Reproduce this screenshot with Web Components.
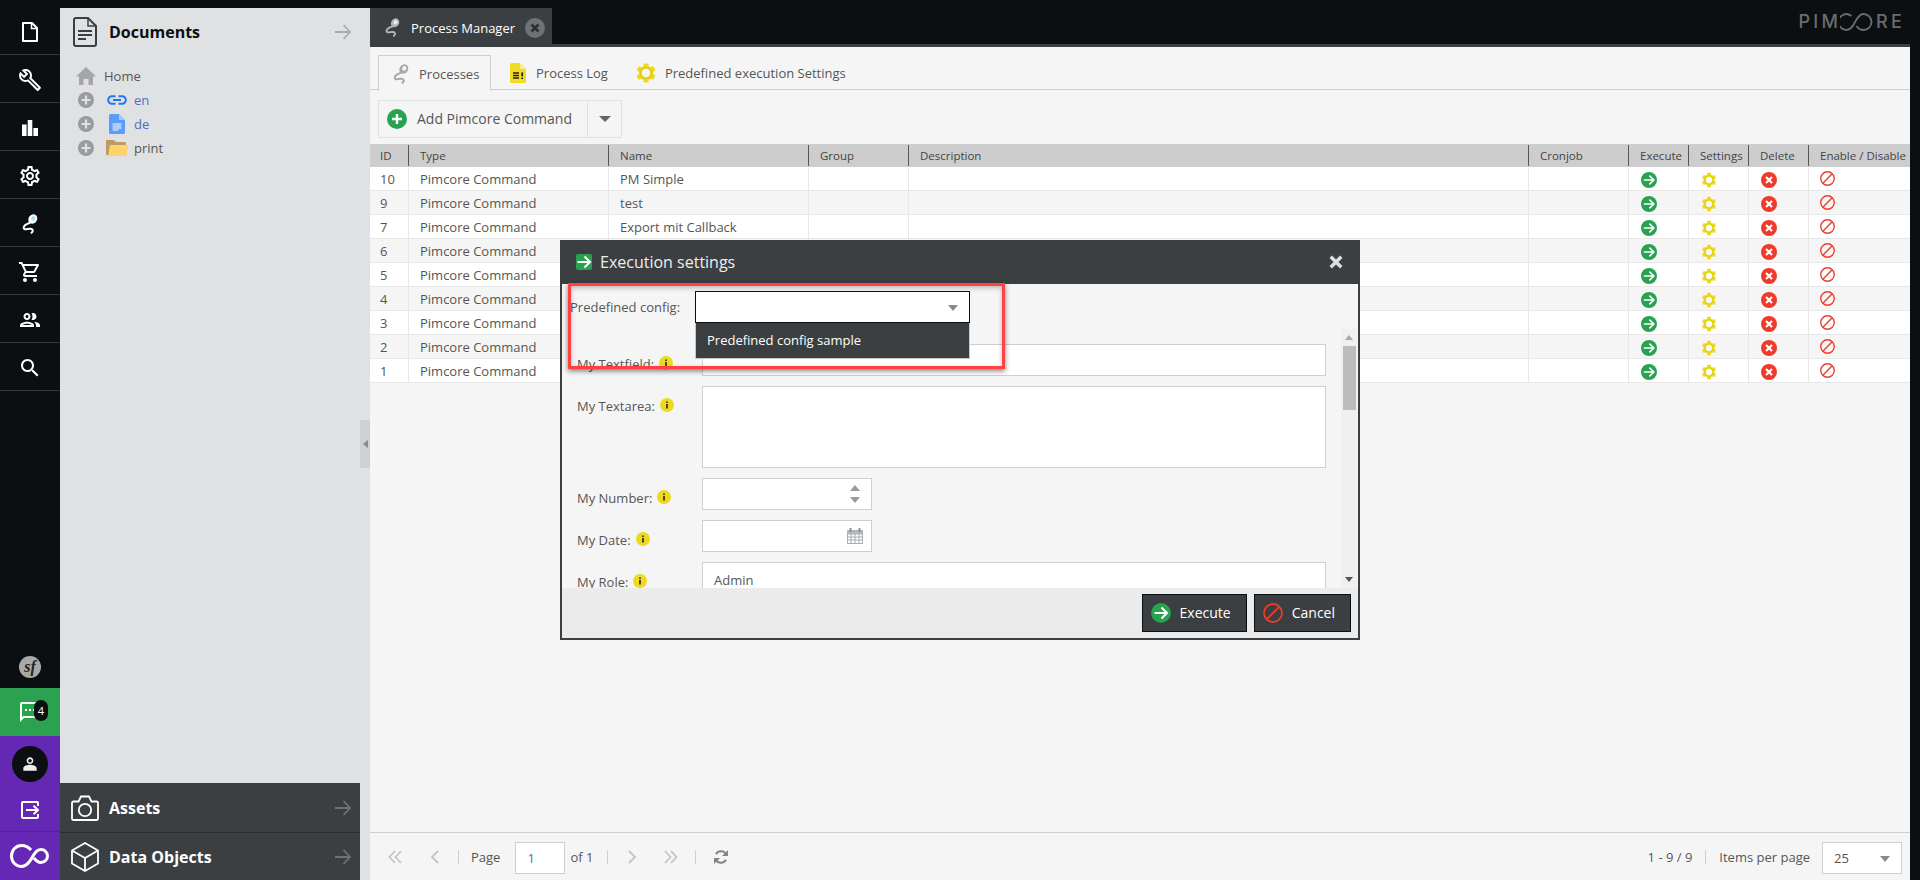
<!DOCTYPE html>
<html lang="en">
<head>
<meta charset="utf-8">
<title>Process Manager</title>
<style>
  html, body { margin: 0; height: 100%; background: #0b0f12; overflow: hidden; }
  body { font: 13px/18px "Open Sans", "Liberation Sans", sans-serif; color: #555; }
</style>
</head>
<body>
<pim-app></pim-app>

<script>
const plug = (body, head) => `<path d="M7.500 9C4.500 10 1.500 11.200 1.700 13.800c.2 2.700 4.300 .6 7 1 2.300.4 2.800 2.200.8 4" fill="none" stroke="${body}" stroke-width="2" stroke-linecap="round"/><ellipse cx="10.800" cy="5" rx="4.200" ry="5" transform="rotate(35 10.800 5)" fill="${body}"/><ellipse cx="11.300" cy="4.400" rx="2" ry="2.400" transform="rotate(35 11.300 4.400)" fill="${head}"/>`;
const GEAR = 'M19.14 12.94c.04-.3.06-.61.06-.94 0-.32-.02-.64-.07-.94l2.030-1.580c.18-.14.23-.41.12-.61l-1.920-3.320c-.12-.22-.37-.29-.59-.22l-2.390.96c-.5-.38-1.030-.7-1.620-.94l-.36-2.540c-.04-.24-.24-.41-.48-.41h-3.840c-.24 0-.43.17-.47.41l-.36 2.540c-.59.24-1.130.57-1.620.94l-2.390-.96c-.22-.08-.47 0-.59.22L2.740 8.870c-.12.21-.08.47.12.61l2.030 1.580c-.05.3-.09.63-.09.94s.02.64.07.94l-2.030 1.580c-.18.14-.23.41-.12.61l1.920 3.320c.12.22.37.29.59.22l2.390-.96c.5.38 1.030.7 1.620.94l.36 2.540c.05.24.24.41.48.41h3.840c.24 0 .44-.17.47-.41l.36-2.540c.59-.24 1.130-.56 1.620-.94l2.390.96c.22.08.47 0 .59-.22l1.920-3.320c.12-.22.07-.47-.12-.61l-2.010-1.580zM12 16.200c-2.320 0-4.200-1.880-4.200-4.200s1.880-4.200 4.200-4.200 4.200 1.880 4.200 4.200-1.880 4.200-4.200 4.200z';
const ICONS = {
  page: ['0 0 16 20', '<path d="M1 1h9l5 5v13H1z" fill="none" stroke="currentColor" stroke-width="2" stroke-linejoin="round"/><path d="M9.500 1v5.500H15" fill="none" stroke="currentColor" stroke-width="1.500"/>'],
  wrench: ['0 0 24 24', '<path fill="currentColor" d="M22.610 18.990l-9.080-9.080c.93-2.340.45-5.100-1.440-7-2.300-2.300-5.890-2.510-8.440-.64L7.480 6.100 6.100 7.480 2.280 3.660c-1.870 2.540-1.660 6.130.64 8.430 1.860 1.860 4.570 2.350 6.890 1.480l9.110 9.110c.39.39 1.020.39 1.410 0l2.300-2.300c.4-.38.4-1.010-.02-1.390zm-3 1.600l-9.460-9.460c-.61.45-1.290.72-2 .82-1.360.2-2.790-.21-3.830-1.250C3.370 9.760 2.930 8.500 3 7.260l3.090 3.090 4.240-4.240-3.090-3.090c1.240-.07 2.490.37 3.440 1.310 1.080 1.080 1.490 2.570 1.240 3.960-.12.71-.42 1.370-.88 1.960l9.450 9.450-.88.88z"/>'],
  bars: ['0 0 16 16', '<path fill="currentColor" d="M0 4.500h4.600V16H0zM5.700 0h4.600v16H5.700zM11.400 8H16v8h-4.600z"/>'],
  cog: ['0 0 24 24', '<path fill="currentColor" d="M19.430 12.980c.04-.32.07-.64.07-.98 0-.34-.03-.66-.07-.98l2.110-1.650c.19-.15.24-.42.12-.64l-2-3.460c-.09-.16-.26-.25-.44-.25-.06 0-.12.01-.17.03l-2.490 1c-.52-.4-1.080-.73-1.690-.98l-.38-2.650C14.460 2.180 14.250 2 14 2h-4c-.25 0-.46.18-.49.42l-.38 2.650c-.61.25-1.170.59-1.690.98l-2.490-1c-.06-.02-.12-.03-.18-.03-.17 0-.34.09-.43.25l-2 3.460c-.13.22-.07.49.12.64l2.110 1.650c-.04.32-.07.65-.07.98 0 .33.03.66.07.98l-2.110 1.650c-.19.15-.24.42-.12.64l2 3.460c.09.16.26.25.44.25.06 0 .12-.01.17-.03l2.490-1c.52.4 1.080.73 1.690.98l.38 2.650c.03.24.24.42.49.42h4c.25 0 .46-.18.49-.42l.38-2.650c.61-.25 1.170-.59 1.690-.98l2.490 1c.06.02.12.03.18.03.17 0 .34-.09.43-.25l2-3.460c.12-.22.07-.49-.12-.64l-2.110-1.650zm-1.980-1.710c.04.31.05.52.05.73 0 .21-.02.43-.05.73l-.14 1.130.89.7 1.080.84-.7 1.210-1.270-.51-1.040-.42-.9.68c-.43.32-.84.56-1.250.73l-1.060.43-.16 1.130-.2 1.350h-1.400l-.19-1.350-.16-1.130-1.060-.43c-.43-.18-.83-.41-1.230-.71l-.91-.7-1.060.43-1.270.51-.7-1.210 1.080-.84.89-.7-.14-1.130c-.03-.31-.05-.54-.05-.74s.02-.43.05-.73l.14-1.130-.89-.7-1.080-.84.7-1.210 1.270.51 1.040.42.9-.68c.43-.32.84-.56 1.250-.73l1.060-.43.16-1.130.2-1.350h1.390l.19 1.350.16 1.130 1.060.43c.43.18.83.41 1.230.71l.91.7 1.060-.43 1.270-.51.7 1.210-1.070.85-.89.7.14 1.130zM12 8c-2.210 0-4 1.790-4 4s1.790 4 4 4 4-1.790 4-4-1.790-4-4-4zm0 6c-1.100 0-2-.9-2-2s.9-2 2-2 2 .9 2 2-.9 2-2 2z"/>'],
  'plug-nav': ['0 0 16 20', plug('#fff', '#a9dcf5')],
  'plug-dim': ['0 0 16 20', plug('#a8a8a8', '#f5f5f5')],
  'plug-tab': ['0 0 16 20', plug('#b5b6b7', '#eeeeee')],
  cart: ['0 0 24 24', '<path fill="currentColor" d="M15.550 13c.75 0 1.410-.41 1.750-1.030l3.580-6.490c.37-.66-.11-1.480-.87-1.480H5.210l-.94-2H1v2h2l3.600 7.590-1.350 2.440C4.520 15.370 5.480 17 7 17h12v-2H7l1.100-2h7.450zM6.160 6h12.150l-2.760 5H8.530L6.160 6zM7 18c-1.100 0-1.990.9-1.990 2S5.900 22 7 22s2-.9 2-2-.9-2-2-2zm10 0c-1.100 0-1.990.9-1.990 2s.89 2 1.990 2 2-.9 2-2-.9-2-2-2z"/>'],
  people: ['0 0 24 24', '<path fill="currentColor" d="M9 13.750c-2.340 0-7 1.170-7 3.500V19h14v-1.750c0-2.330-4.660-3.500-7-3.500zM4.340 17c.84-.58 2.870-1.250 4.660-1.250s3.820.67 4.660 1.250H4.340zM9 12c1.930 0 3.500-1.570 3.500-3.500S10.930 5 9 5 5.500 6.570 5.500 8.500 7.070 12 9 12zm0-5c.83 0 1.500.67 1.500 1.500S9.830 10 9 10s-1.500-.67-1.500-1.500S8.170 7 9 7zm7.040 6.810c1.160.84 1.960 1.960 1.960 3.440V19h4v-1.750c0-2.020-3.500-3.170-5.960-3.440zM15 12c1.930 0 3.500-1.570 3.500-3.500S16.930 5 15 5c-.54 0-1.040.13-1.500.35.63.89 1 1.980 1 3.150s-.37 2.260-1 3.150c.46.22.96.35 1.500.35z"/>'],
  search: ['0 0 24 24', '<path fill="currentColor" d="M15.500 14h-.79l-.28-.27C15.410 12.590 16 11.110 16 9.500 16 5.910 13.090 3 9.500 3S3 5.910 3 9.500 5.910 16 9.500 16c1.610 0 3.090-.59 4.230-1.570l.27.28v.79l5 4.990L20.490 19l-4.990-5zm-6 0C7.010 14 5 11.990 5 9.500S7.010 5 9.500 5 14 7.010 14 9.500 11.990 14 9.500 14z"/>'],
  chat: ['0 0 24 24', '<path fill="currentColor" d="M20 2H4c-1.100 0-2 .9-2 2v18l4-4h14c1.100 0 2-.9 2-2V4c0-1.100-.9-2-2-2zm0 14H5.170L4 17.170V4h16v12zM7 9h2v2H7zm4 0h2v2h-2zm4 0h2v2h-2z"/>'],
  person: ['0 0 24 24', '<path fill="#eee" fill-rule="evenodd" d="M12 5.900c1.160 0 2.100.94 2.100 2.100s-.94 2.100-2.100 2.100S9.900 9.160 9.900 8s.94-2.100 2.100-2.100M12 4C9.790 4 8 5.790 8 8s1.790 4 4 4 4-1.790 4-4-1.790-4-4-4zm0 9c-2.670 0-8 1.340-8 4v3h16v-3c0-2.660-5.330-4-8-4z"/>'],
  logout: ['0 0 18 18', '<path d="M17 5V2a1 1 0 0 0-1-1H2a1 1 0 0 0-1 1v14a1 1 0 0 0 1 1h14a1 1 0 0 0 1-1v-3M5 9h12M12.500 4.800 17 9l-4.500 4.200" fill="none" stroke="currentColor" stroke-width="2"/>'],
  infinity: ['0 0 40 24', '<path d="M21 6C18 2.500 15 1.500 11.500 1.500 6 1.500 1.500 6 1.500 12S6 22.500 11.500 22.500C17 22.500 20 17.500 23 12c2.500-4.500 4.500-6.500 8-6.500 3.700 0 6.500 3 6.500 6.500s-2.800 6.500-6.500 6.500c-3 0-5-1.800-7-4.500" fill="none" stroke="currentColor" stroke-width="3"/>'],
  docs: ['0 0 24 30', '<path d="M1 3a2 2 0 0 1 2-2h12l8 8v18a2 2 0 0 1-2 2H3a2 2 0 0 1-2-2z" fill="none" stroke="currentColor" stroke-width="2"/><path d="M15 1v8h8" fill="none" stroke="currentColor" stroke-width="1.500"/><path d="M5 14h14M5 18h14M5 22h8" stroke="currentColor" stroke-width="2"/>'],
  camera: ['0 0 28 26', '<path d="M2.500 6.500h5L10 1.500h8l2.500 5h5a1.500 1.500 0 0 1 1.500 1.500v15.500a1.500 1.500 0 0 1-1.500 1.500h-23A1.500 1.500 0 0 1 1 23.500V8a1.500 1.500 0 0 1 1.500-1.500z" fill="none" stroke="currentColor" stroke-width="1.800"/><circle cx="14" cy="15" r="6.200" fill="none" stroke="currentColor" stroke-width="1.800"/>'],
  cube: ['0 0 28 30', '<path d="M14 1 27 8.500v13L14 29 1 21.500v-13zM1 8.500 14 16l13-7.500M14 16v13" fill="none" stroke="currentColor" stroke-width="1.800" stroke-linejoin="round"/>'],
  arrow: ['0 0 16 16', '<path d="M0 8h15M8.500 1 15 8l-6.500 7" fill="none" stroke="currentColor" stroke-width="1.800"/>'],
  home: ['0 0 20 18', '<path fill="currentColor" d="M10 0 20 9.500h-3V18h-4.500v-6h-5v6H3V9.500H0z"/>'],
  expand: ['0 0 16 16', '<circle cx="8" cy="8" r="8" fill="#9a9b9c"/><path d="M8 3.500v9M3.500 8h9" stroke="#e0e1e3" stroke-width="2.200"/>'],
  link: ['0 0 20 10', '<path d="M8.500 1.200H5a3.800 3.800 0 0 0 0 7.600h3.500M11.500 1.200H15a3.800 3.800 0 0 1 0 7.600h-3.500M6 5h8" fill="none" stroke="#2177f0" stroke-width="2"/>'],
  doc: ['0 0 16 20', '<path fill="#5a9cf8" d="M1.500 0H10l6 6v12.500a1.500 1.500 0 0 1-1.500 1.500h-13A1.500 1.500 0 0 1 0 18.500v-17A1.500 1.500 0 0 1 1.500 0z"/><path fill="#a6c8fb" d="M10 0l6 6h-6z"/><path d="M3.500 10h9M3.500 12h9M3.500 14h9M3.500 16h6" stroke="#fff" stroke-width="1"/>'],
  folder: ['0 0 22 16', '<path fill="#bd9a66" d="M1 0h7l2 2h9a1 1 0 0 1 1 1v12H0V1a1 1 0 0 1 1-1z"/><path fill="#fdd46b" d="M4 5h17a1 1 0 0 1 1 1.200L20.500 15a1 1 0 0 1-1 1H2.200z"/>'],
  close: ['0 0 20 20', '<circle cx="10" cy="10" r="10" fill="#6f7173"/><path d="M6.500 6.500l7 7M13.500 6.500l-7 7" stroke="#2b2d2f" stroke-width="2.600"/>'],
  log: ['0 0 16 20', '<path fill="#f0dc21" d="M1.500 0H10l6 6v12.500a1.500 1.500 0 0 1-1.500 1.500h-13A1.500 1.500 0 0 1 0 18.500v-17A1.500 1.500 0 0 1 1.500 0z"/><path fill="#f8ee8c" d="M10 0l6 6h-6z"/><path d="M3 10h6M3 12.500h6M3 15h6" stroke="#222" stroke-width="1.300"/><path d="M12.200 9.500v3.800M12.200 14.500V16" stroke="#222" stroke-width="1.800"/>'],
  gear: ['0 0 24 24', `<path fill="#efd91e" d="${GEAR}"/><circle cx="12" cy="12" r="5.700" fill="none" stroke="#b9a817" stroke-width=".8" opacity=".5"/>`],
  add: ['0 0 20 20', '<circle cx="10" cy="10" r="10" fill="#28a24f"/><path d="M10 5v10M5 10h10" stroke="#fff" stroke-width="2.400"/>'],
  run: ['0 0 20 20', '<circle cx="10" cy="10" r="10" fill="#28a24f"/><path d="M3.500 10h12M10.500 4.500 16 10l-5.500 5.500" fill="none" stroke="#fff" stroke-width="2"/>'],
  'run-square': ['0 0 16 16', '<rect width="16" height="16" rx="2" fill="#28a24f"/><path d="M1.500 8h12M8.500 2.500 14 8l-5.500 5.500" fill="none" stroke="#fff" stroke-width="2"/>'],
  del: ['0 0 16 16', '<circle cx="8" cy="8" r="8" fill="#ee3b2b"/><path d="M5 5l6 6M11 5l-6 6" stroke="#fff" stroke-width="2.200"/>'],
  ban: ['0 0 20 20', '<circle cx="10" cy="10" r="9" fill="none" stroke="#ee3b2b" stroke-width="1.800"/><path d="M3.800 16.200 16.200 3.800" stroke="#ee3b2b" stroke-width="1.800"/>'],
  'x-mark': ['0 0 12 12', '<path d="M1.500 1.500l9 9M10.500 1.500l-9 9" stroke="#dedede" stroke-width="3"/>'],
  info: ['0 0 14 14', '<circle cx="7" cy="7" r="7" fill="#efd91e"/><path d="M7 3.500v1.500M7 6v4.500" stroke="#222" stroke-width="1.600"/>'],
  calendar: ['0 0 16 16', '<path d="M.5 2.500h15v13H.5zM.5 6h15M.5 9h15M.5 12h15M4 6v9.500M8 6v9.500M12 6v9.500" fill="#fff" stroke="#a9acb0" stroke-width="1"/><path d="M.5 2.500h15V6H.5z" fill="#b4b7bb"/><path d="M3.500 0v4M12.500 0v4" stroke="#8f9297" stroke-width="2"/>'],
  first: ['0 0 14 14', '<path d="M7 1 1.500 7 7 13M13 1 7.500 7l5.500 6" fill="none" stroke="#c4c4c4" stroke-width="1.800"/>'],
  prev: ['0 0 10 14', '<path d="M8 1 2 7l6 6" fill="none" stroke="#c4c4c4" stroke-width="1.800"/>'],
  next: ['0 0 10 14', '<path d="M2 1l6 6-6 6" fill="none" stroke="#c4c4c4" stroke-width="1.800"/>'],
  last: ['0 0 14 14', '<path d="M1 1l5.500 6L1 13M7 1l5.500 6L7 13" fill="none" stroke="#c4c4c4" stroke-width="1.800"/>'],
  refresh: ['0 0 14 14', '<path d="M12.500 5.500A5.700 5.700 0 0 0 2 4.200M1.500 8.500A5.700 5.700 0 0 0 12 9.800" fill="none" stroke="#858585" stroke-width="2"/><path d="M14 0v6H8zM0 14V8h6z" fill="#858585"/>']
};

class PimIcon extends HTMLElement {
  connectedCallback() {
    const [box, body] = ICONS[this.getAttribute('name')];
    const w = this.getAttribute('w') || 16;
    const h = this.getAttribute('h') || w;
    this.attachShadow({ mode: 'open' }).innerHTML = `
      <style>:host { display: inline-flex; flex: none; } svg { display: block; }</style>
      <svg xmlns="http://www.w3.org/2000/svg" width="${w}" height="${h}" viewBox="${box}">${body}</svg>`;
  }
}
customElements.define('pim-icon', PimIcon);

const sidebarTemplate = document.createElement('template');
sidebarTemplate.innerHTML = `
  <style>
    :host { display: flex; flex-direction: column; flex: none; box-sizing: border-box; width: 60px; height: 880px; padding-top: 7px; background: #0b0f12; color: #fff; }
    .item { box-sizing: border-box; flex: none; height: 48px; padding-top: 3px; display: flex; align-items: center; justify-content: center; border-bottom: 1px solid #33363a; }
    .spacer { flex: 1; }
    .symfony { height: 48px; flex: none; display: flex; align-items: center; justify-content: center; padding-top: 6px; box-sizing: border-box; }
    .symfony span { width: 22px; height: 22px; border-radius: 50%; background: #a9a9a9; color: #222; text-align: center; font: italic 700 16px/21px "Liberation Serif", serif; }
    .chat { position: relative; flex: none; height: 48px; background: #2aa250; display: flex; align-items: center; justify-content: center; }
    .badge { position: absolute; left: 34px; top: 12px; width: 14px; height: 21px; border-radius: 7px; background: #0b0f12; font-size: 11px; line-height: 21px; text-align: center; }
    .user { background: #6428b4; flex: none; height: 144px; display: flex; flex-direction: column; }
    .avatar-row { height: 49px; display: flex; justify-content: center; padding-top: 10px; box-sizing: border-box; }
    .avatar { width: 36px; height: 36px; border-radius: 50%; background: #0b0f12; display: flex; align-items: center; justify-content: center; }
    .logout { height: 47px; display: flex; align-items: center; justify-content: center; border-bottom: 1px solid #54209a; padding-top: 4px; box-sizing: border-box; }
    .logo { flex: 1; display: flex; align-items: center; justify-content: center; }
  </style>
  <div class="item"><pim-icon name="page" w="16" h="20"></pim-icon></div>
  <div class="item"><pim-icon name="wrench" w="24"></pim-icon></div>
  <div class="item"><pim-icon name="bars" w="16"></pim-icon></div>
  <div class="item"><pim-icon name="cog" w="24"></pim-icon></div>
  <div class="item"><pim-icon name="plug-nav" w="16" h="20"></pim-icon></div>
  <div class="item"><pim-icon name="cart" w="24"></pim-icon></div>
  <div class="item"><pim-icon name="people" w="24"></pim-icon></div>
  <div class="item"><pim-icon name="search" w="24"></pim-icon></div>
  <div class="spacer"></div>
  <div class="symfony"><span>sf</span></div>
  <div class="chat"><pim-icon name="chat" w="24"></pim-icon><span class="badge">4</span></div>
  <div class="user">
    <div class="avatar-row"><div class="avatar"><pim-icon name="person" w="20"></pim-icon></div></div>
    <div class="logout"><pim-icon name="logout" w="18"></pim-icon></div>
    <div class="logo"><pim-icon name="infinity" w="40" h="24"></pim-icon></div>
  </div>
`;
class PimSidebar extends HTMLElement {
  constructor() {
    super();
    this.attachShadow({ mode: 'open' }).append(sidebarTemplate.content.cloneNode(true));
  }
}
customElements.define('pim-sidebar', PimSidebar);

const treeRowTemplate = document.createElement('template');
treeRowTemplate.innerHTML = `
  <style>
    :host { display: flex; align-items: center; height: 24px; padding-left: 18px; }
    .exp { display: flex; margin-right: 12px; }
    .ico { display: flex; justify-content: center; width: 22px; margin-right: 6px; }
    :host([root]) .ico { width: 20px; margin: 0 8px 0 -2px; }
    :host([root]) .exp { display: none; }
    :host([linked]) { color: #4a70bd; }
  </style>
  <span class="exp"><pim-icon name="expand" w="16"></pim-icon></span>
  <span class="ico"></span>
  <slot></slot>
`;
class PimTreeRow extends HTMLElement {
  constructor() {
    super();
    this.attachShadow({ mode: 'open' }).append(treeRowTemplate.content.cloneNode(true));
  }
  connectedCallback() {
    const icon = document.createElement('pim-icon');
    icon.setAttribute('name', this.getAttribute('icon'));
    icon.setAttribute('w', this.getAttribute('w'));
    icon.setAttribute('h', this.getAttribute('h'));
    icon.style.color = '#a5a6a7';
    this.shadowRoot.querySelector('.ico').append(icon);
  }
}
customElements.define('pim-tree-row', PimTreeRow);

const accordionTemplate = document.createElement('template');
accordionTemplate.innerHTML = `
  <style>
    :host { display: flex; align-items: center; flex: none; box-sizing: border-box; height: 48px; padding: 0 9px 0 11px; background: #3c3f41; color: #fff; font-weight: 700; font-size: 16px; border-top: 1px solid #2c2e30; }
    :host([open]) { background: none; color: #0b0f12; border: 0; }
    :host([tall]) { height: 49px; border: 0; }
    .ico { display: flex; justify-content: center; width: 28px; margin-right: 10px; }
    .title { flex: 1; }
    .arrow { display: flex; color: #6f7173; }
    :host([open]) .arrow { color: #a9aaac; }
    :host([open]) .ico { color: #3c3f41; }
  </style>
  <span class="ico"><slot name="icon"></slot></span>
  <span class="title"><slot></slot></span>
  <span class="arrow"><pim-icon name="arrow" w="16"></pim-icon></span>
`;
class PimAccordion extends HTMLElement {
  constructor() {
    super();
    this.attachShadow({ mode: 'open' }).append(accordionTemplate.content.cloneNode(true));
  }
}
customElements.define('pim-accordion', PimAccordion);

const treePanelTemplate = document.createElement('template');
treePanelTemplate.innerHTML = `
  <style>
    :host { display: flex; flex-direction: column; flex: none; width: 310px; height: 872px; margin-top: 8px; background: #e0e1e3; position: relative; }
    .panel { width: 300px; height: 100%; display: flex; flex-direction: column; }
    .tree { flex: 1; padding-top: 8px; }
    .collapse { position: absolute; left: 300px; top: 412px; width: 10px; height: 48px; background: #cfd0d1; display: flex; align-items: center; justify-content: center; }
    .collapse i { border: 4px solid transparent; border-right: 5px solid #8a8a8a; border-left: 0; }
  </style>
  <div class="panel">
    <pim-accordion open><pim-icon slot="icon" name="docs" w="24" h="30"></pim-icon>Documents</pim-accordion>
    <div class="tree">
      <pim-tree-row root icon="home" w="20" h="18">Home</pim-tree-row>
      <pim-tree-row linked icon="link" w="20" h="10">en</pim-tree-row>
      <pim-tree-row linked icon="doc" w="16" h="20">de</pim-tree-row>
      <pim-tree-row icon="folder" w="22" h="16">print</pim-tree-row>
    </div>
    <pim-accordion tall><pim-icon slot="icon" name="camera" w="28" h="26"></pim-icon>Assets</pim-accordion>
    <pim-accordion><pim-icon slot="icon" name="cube" w="28" h="30"></pim-icon>Data Objects</pim-accordion>
  </div>
  <div class="collapse"><i></i></div>
`;
class PimTreePanel extends HTMLElement {
  constructor() {
    super();
    this.attachShadow({ mode: 'open' }).append(treePanelTemplate.content.cloneNode(true));
  }
}
customElements.define('pim-tree-panel', PimTreePanel);

const tabStripTemplate = document.createElement('template');
tabStripTemplate.innerHTML = `
  <style>
    :host { display: flex; flex: none; justify-content: space-between; box-sizing: border-box; height: 47px; padding-top: 8px; background: #0b0f12; border-bottom: 3px solid #3c3f41; }
    .tab { display: flex; align-items: center; height: 39px; width: 182px; box-sizing: border-box; padding-left: 15px; background: #3c3f41; color: #fff; }
    .tab span { margin: 0 10px 0 11px; }
    .logo { display: flex; align-items: center; height: 20px; margin: 4px 5px 0 0; color: #6a6c6e; font: 500 18px/20px Inter, "Liberation Sans", sans-serif; letter-spacing: 3.200px; }
    .logo svg { margin: 0 3px 0 -1px; }
  </style>
  <div class="tab">
    <pim-icon name="plug-tab" w="15" h="19"></pim-icon>
    <span>Process Manager</span>
    <pim-icon name="close" w="20"></pim-icon>
  </div>
  <div class="logo">PIM<svg width="33" height="18" viewBox="0 0 32 18"><path d="M11 3C9 1.500 7.500 1 6 1a8 8 0 0 0 0 16c3.500 0 6-3 8-7s5-9 9-9a8 8 0 0 1 0 16c-3 0-5-1-7-4" fill="none" stroke="currentColor" stroke-width="1.800"/></svg>RE</div>
`;
class PimTabStrip extends HTMLElement {
  constructor() {
    super();
    this.attachShadow({ mode: 'open' }).append(tabStripTemplate.content.cloneNode(true));
  }
}
customElements.define('pim-tab-strip', PimTabStrip);

const subTabsTemplate = document.createElement('template');
subTabsTemplate.innerHTML = `
  <style>
    :host { display: flex; flex: none; box-sizing: border-box; height: 43px; padding: 8px 0 0 8px; border-bottom: 1px solid #cfcfcf; }
    .tab { display: flex; align-items: center; box-sizing: border-box; height: 35px; padding: 0 11px 0 15px; }
    .tab--active { width: 113px; height: 36px; border: 1px solid #cfcfcf; border-bottom: 0; background: #f5f5f5; padding-left: 14px; }
    .tab span { margin-left: 10px; }
    .log { margin-left: 4px; }
    .gear span { margin-left: 7px; }
  </style>
  <div class="tab tab--active"><pim-icon name="plug-dim" w="16" h="20"></pim-icon><span>Processes</span></div>
  <div class="tab log"><pim-icon name="log" w="16" h="20"></pim-icon><span>Process Log</span></div>
  <div class="tab gear"><pim-icon name="gear" w="24"></pim-icon><span>Predefined execution Settings</span></div>
`;
class PimSubTabs extends HTMLElement {
  constructor() {
    super();
    this.attachShadow({ mode: 'open' }).append(subTabsTemplate.content.cloneNode(true));
  }
}
customElements.define('pim-sub-tabs', PimSubTabs);

const toolbarTemplate = document.createElement('template');
toolbarTemplate.innerHTML = `
  <style>
    :host { display: flex; flex: none; box-sizing: border-box; height: 54px; padding: 10px 0 6px 8px; }
    .split { display: flex; height: 38px; box-sizing: border-box; border: 1px solid #e0e0e0; }
    .main { display: flex; align-items: center; box-sizing: border-box; width: 209px; padding-left: 8px; border-right: 1px solid #e0e0e0; }
    .main span { margin-left: 10px; font-size: 14px; }
    .more { display: flex; align-items: center; justify-content: center; width: 33px; }
    .more i { border: 6px solid transparent; border-top: 6px solid #666; border-bottom: 0; }
  </style>
  <div class="split">
    <div class="main"><pim-icon name="add" w="20"></pim-icon><span>Add Pimcore Command</span></div>
    <div class="more"><i></i></div>
  </div>
`;
class PimToolbar extends HTMLElement {
  constructor() {
    super();
    this.attachShadow({ mode: 'open' }).append(toolbarTemplate.content.cloneNode(true));
  }
}
customElements.define('pim-toolbar', PimToolbar);

const gridTemplate = document.createElement('template');
gridTemplate.innerHTML = `
  <style>
    :host { display: block; flex: 1; --cols: 39px 200px 200px 100px 620px 100px 60px 60px 60px 101px; }
    .head, .row { display: grid; grid-template-columns: var(--cols); }
    .head { height: 23px; background: #cdcdcd; color: #444; font-size: 11.500px; line-height: 23px; }
    .head div { padding-left: 11px; position: relative; white-space: nowrap; overflow: hidden; }
    .head div:first-child { padding-left: 10px; }
    .head div:not(:last-child)::after { content: ""; position: absolute; right: 0; top: 1px; bottom: 1px; width: 1px; background: #555; }
    .row { box-sizing: border-box; height: 24px; border-bottom: 1px solid #e8e8e8; line-height: 23px; }
    .row:nth-child(odd) { background: #fff; }
    .row div { display: flex; align-items: center; box-sizing: border-box; padding: 1px 0 0 11px; border-right: 1px solid #e8e8e8; min-width: 0; }
    .row div:first-child { padding-left: 10px; }
    .row div:last-child { border-right: 0; }
    .row .act--run { padding-left: 12px; }
    .row .act--ban { padding: 0 0 1px 11px; }
  </style>
  <div class="head"></div>
  <div class="body"></div>
`;
class PimGrid extends HTMLElement {
  constructor() {
    super();
    this.attachShadow({ mode: 'open' }).append(gridTemplate.content.cloneNode(true));
  }
  connectedCallback() {
    const cols = ['ID', 'Type', 'Name', 'Group', 'Description', 'Cronjob', 'Execute', 'Settings', 'Delete', 'Enable / Disable'];
    const rows = [[10, 'PM Simple'], [9, 'test'], [7, 'Export mit Callback'], [6, ''], [5, ''], [4, ''], [3, ''], [2, ''], [1, '']];
    this.shadowRoot.querySelector('.head').innerHTML = cols.map(c => `<div>${c}</div>`).join('');
    this.shadowRoot.querySelector('.body').innerHTML = rows.map(([id, name]) => `
      <div class="row">
        <div>${id}</div><div>Pimcore Command</div><div>${name}</div><div></div><div></div><div></div>
        <div class="act--run"><pim-icon name="run" w="16"></pim-icon></div>
        <div><pim-icon name="gear" w="18"></pim-icon></div>
        <div class="act--run"><pim-icon name="del" w="16"></pim-icon></div>
        <div class="act--ban"><pim-icon name="ban" w="15"></pim-icon></div>
      </div>`).join('');
  }
}
customElements.define('pim-grid', PimGrid);

const pagerTemplate = document.createElement('template');
pagerTemplate.innerHTML = `
  <style>
    :host { display: flex; flex: none; align-items: center; box-sizing: border-box; height: 48px; padding: 0 8px 0 18px; border-top: 1px solid #cfcfcf; }
    .sep { width: 1px; height: 14px; background: #cfcfcf; }
    .box { box-sizing: border-box; height: 32px; border: 1px solid #cfcfcf; background: #fff; display: flex; align-items: center; margin-top: 2px; }
    .page { width: 50px; padding-left: 11px; margin: 2px 5px 0 15px; color: #4a70bd; }
    .count { margin-left: auto; }
    .size { width: 80px; padding-left: 11px; margin-left: 12px; position: relative; }
    .size i { position: absolute; right: 11px; top: 13px; border: 5px solid transparent; border-top: 6px solid #8a8a8a; border-bottom: 0; }
  </style>
  <pim-icon name="first" w="14"></pim-icon>
  <pim-icon name="prev" w="10" h="14" style="margin-left:28px"></pim-icon>
  <span class="sep" style="margin-left:18px"></span>
  <span style="margin-left:12px">Page</span>
  <span class="box page">1</span>
  <span>of 1</span>
  <span class="sep" style="margin-left:14px"></span>
  <pim-icon name="next" w="10" h="14" style="margin-left:19px"></pim-icon>
  <pim-icon name="last" w="14" style="margin-left:27px"></pim-icon>
  <span class="sep" style="margin-left:17px"></span>
  <pim-icon name="refresh" w="14" style="margin-left:18px"></pim-icon>
  <span class="count">1 - 9 / 9</span>
  <span class="sep" style="margin-left:13px"></span>
  <span style="margin-left:13px">Items per page</span>
  <span class="box size">25<i></i></span>
`;
class PimPager extends HTMLElement {
  constructor() {
    super();
    this.attachShadow({ mode: 'open' }).append(pagerTemplate.content.cloneNode(true));
  }
}
customElements.define('pim-pager', PimPager);

const fieldTemplate = document.createElement('template');
fieldTemplate.innerHTML = `
  <style>
    :host { display: flex; margin-bottom: 10px; }
    .label { display: flex; align-items: center; flex: none; width: 125px; height: 18px; margin-top: 11px; white-space: nowrap; }
    .label pim-icon { margin-left: 5px; margin-top: -2px; }
    .box { box-sizing: border-box; position: relative; width: var(--w, 624px); height: var(--h, 32px); border: 1px solid #cfcfcf; background: #fff; padding: 8px 11px; }
    .trail { position: absolute; right: 8px; top: 0; bottom: 0; width: 16px; display: flex; flex-direction: column; align-items: center; justify-content: center; gap: 6px; }
    .up { border: 5px solid transparent; border-bottom: 6px solid #9a9a9a; border-top: 0; }
    .down { border: 5px solid transparent; border-top: 6px solid #9a9a9a; border-bottom: 0; }
  </style>
  <div class="label"></div>
  <div class="box"><slot></slot><div class="trail"><slot name="trail"></slot></div></div>
`;
class PimField extends HTMLElement {
  constructor() {
    super();
    this.attachShadow({ mode: 'open' }).append(fieldTemplate.content.cloneNode(true));
  }
  connectedCallback() {
    const root = this.shadowRoot;
    root.querySelector('.label').innerHTML = `${this.getAttribute('label')}:<pim-icon name="info" w="14"></pim-icon>`;
    if (this.hasAttribute('spinner')) {
      root.querySelector('.trail').innerHTML = '<i class="up"></i><i class="down"></i>';
    }
  }
}
customElements.define('pim-field', PimField);

const buttonTemplate = document.createElement('template');
buttonTemplate.innerHTML = `
  <style>
    :host { display: inline-flex; align-items: center; box-sizing: border-box; height: 38px; padding: 0 15px 0 8px; border: 1px solid #0b0f12; background: #3c3f41; color: #fff; font-size: 14px; }
    span { margin-left: 9px; }
  </style>
  <slot name="icon"></slot><span><slot></slot></span>
`;
class PimButton extends HTMLElement {
  constructor() {
    super();
    this.attachShadow({ mode: 'open' }).append(buttonTemplate.content.cloneNode(true));
  }
}
customElements.define('pim-button', PimButton);

const windowTemplate = document.createElement('template');
windowTemplate.innerHTML = `
  <style>
    :host { position: absolute; left: 560px; top: 240px; width: 800px; height: 400px; box-sizing: border-box; display: flex; flex-direction: column; border: 2px solid #3c3f41; border-top: 0; background: #f5f5f5; }
    .head { display: flex; align-items: center; flex: none; height: 44px; margin: 0 -2px; padding: 0 17px 0 16px; background: #3c3f41; color: #eee; font-size: 16px; }
    .head span { flex: 1; margin-left: 8px; }
    .config { display: flex; flex: none; height: 45px; box-sizing: border-box; padding: 7px 0 0 8px; }
    .config label { width: 125px; line-height: 32px; }
    .combo { position: relative; box-sizing: border-box; width: 275px; height: 32px; border: 1px solid #0b0f12; background: #fff; }
    .combo i { position: absolute; right: 11px; top: 13px; border: 5px solid transparent; border-top: 6px solid #8a8a8a; border-bottom: 0; }
    .list { position: absolute; z-index: 2; left: -1px; right: -1px; top: 31px; height: 36px; box-sizing: border-box; padding-left: 11px; border: 1px solid #c8c8c8; border-top: 0; background: #3c3f41; color: #fff; line-height: 34px; }
    .scroll { display: flex; flex: 1; min-height: 0; }
    .form { flex: 1; overflow: hidden; padding: 15px 0 0 15px; }
    .bar { position: relative; flex: none; width: 16px; margin-right: 1px; background: #f0f0f0; }
    .bar b { position: absolute; left: 2px; right: 1px; top: 17px; height: 64px; background: #bcbcbc; }
    .bar i { position: absolute; left: 4px; border: 4px solid transparent; }
    .bar .u { top: 6px; border-bottom: 5px solid #a8a8a8; border-top: 0; }
    .bar .d { bottom: 6px; border-top: 5px solid #555; border-bottom: 0; }
    .foot { display: flex; flex: none; justify-content: flex-end; align-items: center; gap: 7px; height: 50px; box-sizing: border-box; padding: 0 7px 0 0; background: #ebebeb; }
  </style>
  <div class="head"><pim-icon name="run-square" w="16"></pim-icon><span>Execution settings</span><pim-icon name="x-mark" w="14"></pim-icon></div>
  <div class="config">
    <label>Predefined config:</label>
    <div class="combo"><i></i><div class="list">Predefined config sample</div></div>
  </div>
  <div class="scroll">
    <div class="form"><slot></slot></div>
    <div class="bar"><i class="u"></i><b></b><i class="d"></i></div>
  </div>
  <div class="foot"><slot name="buttons"></slot></div>
`;
class PimWindow extends HTMLElement {
  constructor() {
    super();
    this.attachShadow({ mode: 'open' }).append(windowTemplate.content.cloneNode(true));
  }
}
customElements.define('pim-window', PimWindow);

const highlightTemplate = document.createElement('template');
highlightTemplate.innerHTML = `
  <style>
    :host { position: absolute; left: 568px; top: 283px; width: 437px; height: 86px; box-sizing: border-box; border: 3px solid #ff4141; box-shadow: 0 2px 5px rgba(0, 0, 0, .5), inset 0 2px 5px rgba(0, 0, 0, .25); pointer-events: none; }
  </style>
`;
class PimHighlight extends HTMLElement {
  constructor() {
    super();
    this.attachShadow({ mode: 'open' }).append(highlightTemplate.content.cloneNode(true));
  }
}
customElements.define('pim-highlight', PimHighlight);

const appTemplate = document.createElement('template');
appTemplate.innerHTML = `
  <style>
    :host { display: flex; position: relative; width: 1920px; height: 880px; background: #0b0f12; }
    .main { display: flex; flex-direction: column; flex: none; width: 1540px; height: 880px; background: #f5f5f5; }
  </style>
  <pim-sidebar></pim-sidebar>
  <pim-tree-panel></pim-tree-panel>
  <div class="main">
    <pim-tab-strip></pim-tab-strip>
    <pim-sub-tabs></pim-sub-tabs>
    <pim-toolbar></pim-toolbar>
    <pim-grid></pim-grid>
    <pim-pager></pim-pager>
  </div>
  <pim-window>
    <pim-field label="My Textfield"></pim-field>
    <pim-field label="My Textarea" style="--h:82px"></pim-field>
    <pim-field label="My Number" spinner style="--w:170px"></pim-field>
    <pim-field label="My Date" style="--w:170px"><pim-icon slot="trail" name="calendar" w="16"></pim-icon></pim-field>
    <pim-field label="My Role" style="--h:60px">Admin</pim-field>
    <pim-button slot="buttons"><pim-icon slot="icon" name="run" w="20"></pim-icon>Execute</pim-button>
    <pim-button slot="buttons"><pim-icon slot="icon" name="ban" w="20"></pim-icon>Cancel</pim-button>
  </pim-window>
  <pim-highlight></pim-highlight>
`;
class PimApp extends HTMLElement {
  constructor() {
    super();
    this.attachShadow({ mode: 'open' }).append(appTemplate.content.cloneNode(true));
  }
}
customElements.define('pim-app', PimApp);
</script>
</body>
</html>
